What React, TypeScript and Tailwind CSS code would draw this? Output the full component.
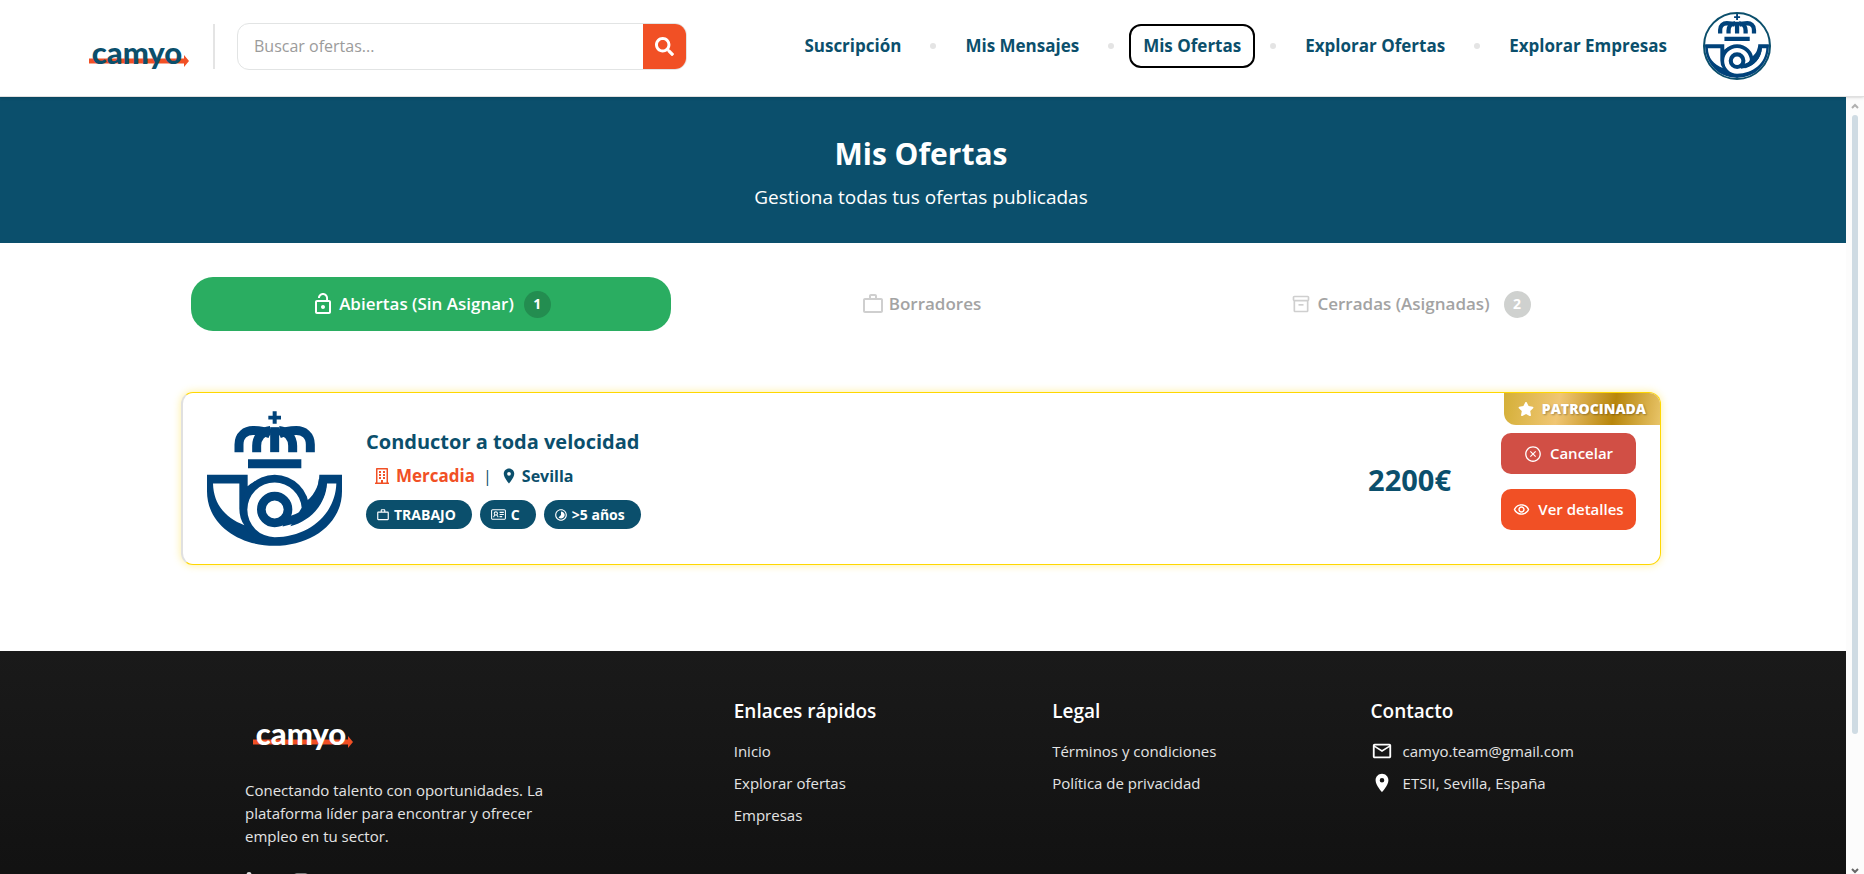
import type { ReactNode } from "react";
import { FaSearch, FaRegBuilding, FaStar, FaLinkedinIn, FaInstagram } from "react-icons/fa";
import { MdLockOpen, MdWorkOutline, MdLocationOn, MdTimelapse, MdMailOutline, MdOutlineInventory2, MdOutlineRemoveRedEye } from "react-icons/md";
import { LiaIdCard } from "react-icons/lia";
import { AiOutlineCloseCircle } from "react-icons/ai";

function CamyoLogo({ color }: { color: string }) {
  return (
    <svg viewBox="0 0 100 60" className="h-15 w-25" role="img" aria-label="camyo">
      <path d="M0 42.500H95V39L100 45L95 51V47.500H0Z" fill="#f15025" />
      <text
        x="48"
        y="48"
        textAnchor="middle"
        fill={color}
        fontSize="31"
        fontWeight="900"
        fontFamily="Lato, sans-serif"
      >
        camyo
      </text>
    </svg>
  );
}

function PostHorn({ className }: { className: string }) {
  return (
    <svg viewBox="0 0 405 404" className={className} role="img" aria-label="Mercadia">
      <g fill="#00427a">
        <path d="M197 0h12v14h13v11h-13v13h-12v-13h-13v-11h13z" />
        <path d="M123 144h160v27h-160z" />
        <g fill="none" stroke="#00427a" strokeWidth="27">
          <path d="M96 123V100C96 72 116 58 138 58C156 58 172 60 190 68" />
          <path d="M149 123V104C149 78 166 60 190 58" />
          <path d="M310 123V100C310 72 290 58 268 58C250 58 234 60 216 68" />
          <path d="M257 123V104C257 78 240 60 216 58" />
          <path d="M203 123V48" />
        </g>
        <path d="M0 191H122V225A104 104 0 0 1 288 278C318 258 337 228 337 191H405V240C405 340 310 404 203 404C95 404 0 340 0 240Z" />
        <circle cx="203" cy="295" r="104" />
      </g>
      <path d="M18 217H97V292Q97 322 112 342C55 320 20 280 18 217Z" fill="#fff" />
      <path d="M203 214A82 82 0 1 0 203 378C305 378 385 310 388 217H360C356 280 310 330 250 345L284 290A82 82 0 0 0 203 214Z" fill="#fff" />
      <path d="M348 204C345 275 300 320 225 334" fill="none" stroke="#00427a" strokeWidth="25" />
      <circle cx="203" cy="295" r="40" fill="#fff" stroke="#00427a" strokeWidth="26" />
    </svg>
  );
}

const navLinks = ["Suscripción", "Mis Mensajes", "Mis Ofertas", "Explorar Ofertas", "Explorar Empresas"];

function Header() {
  return (
    <header className="z-10 flex shrink-0 items-center border-b border-[#e0e0e0] bg-white pr-[93px] pl-[89px] pt-3 pb-4 shadow-sm">
      <a href="#inicio" className="shrink-0">
        <CamyoLogo color="#0b4f6c" />
      </a>
      <div className="ml-6 h-[45px] w-0.5 shrink-0 bg-[#e4e4e4]" />
      <form className="ml-[22px] flex h-[47px] w-[450px] overflow-hidden rounded-xl border border-[#e2e4e4]">
        <input
          type="text"
          aria-label="Buscar ofertas"
          placeholder="Buscar ofertas..."
          className="min-w-0 flex-1 px-4 text-base text-gray-700 outline-none placeholder:text-[#9b9b9b]"
        />
        <button type="button" aria-label="Buscar" className="flex w-[43px] items-center justify-center bg-[#f15025] text-white">
          <FaSearch size={19} />
        </button>
      </form>
      <nav className="ml-auto flex items-center gap-[15px]">
        {navLinks.map((label, i) => (
          <div key={label} className="flex items-center gap-[15px]">
            {i > 0 && <span className="size-1.5 rounded-full bg-[#e4e4e4]" />}
            <a
              href="#nav"
              className={
                label === "Mis Ofertas"
                  ? "rounded-xl border-2 border-black px-3 py-1.5 text-[17px] leading-7 font-bold whitespace-nowrap text-[#0b4f6c]"
                  : "border-2 border-transparent px-3 py-1.5 text-[17px] leading-7 font-bold whitespace-nowrap text-[#0b4f6c]"
              }
            >
              {label}
            </a>
          </div>
        ))}
      </nav>
      <button type="button" aria-label="Perfil" className="ml-[22px] flex size-17 shrink-0 items-center justify-center overflow-hidden rounded-full border-2 border-[#0b4f6c] bg-white">
        <PostHorn className="size-16" />
      </button>
    </header>
  );
}

function Tabs() {
  return (
    <div className="grid grid-cols-3 gap-2.5 px-2.5 text-[17px] font-semibold">
      <button type="button" className="flex h-[54px] items-center justify-center rounded-[22px] bg-[#2aad61] text-white">
        <MdLockOpen size={24} />
        <span className="ml-1">Abiertas (Sin Asignar)</span>
        <span className="ml-2.5 flex size-[27px] items-center justify-center rounded-full bg-[#238d50] text-sm font-bold">1</span>
      </button>
      <button type="button" className="flex h-[54px] items-center justify-center rounded-[22px] text-[#a3a3a3]">
        <MdWorkOutline size={24} className="text-[#cfcfcf]" />
        <span className="ml-1">Borradores</span>
      </button>
      <button type="button" className="flex h-[54px] items-center justify-center rounded-[22px] text-[#a3a3a3]">
        <MdOutlineInventory2 size={20} className="text-[#cfcfcf]" />
        <span className="ml-1.5">Cerradas (Asignadas)</span>
        <span className="ml-3.5 flex size-[27px] items-center justify-center rounded-full bg-[#cfd1cf] text-sm font-bold text-white">2</span>
      </button>
    </div>
  );
}

function Pill({ icon, children }: { icon: ReactNode; children: ReactNode }) {
  return (
    <span className="flex h-[29px] items-center gap-1 rounded-full bg-[#0b4f6c] pr-4 pl-2.5 text-sm font-bold text-white">
      {icon}
      {children}
    </span>
  );
}

function OfferCard() {
  return (
    <article className="relative flex h-[173px] items-center rounded-xl border border-l-2 border-[#ffd700] border-l-[#e0e0e0] bg-white pr-6 pl-6 shadow-[0_0_8px_rgba(255,215,0,0.4)]">
      <div className="absolute top-0 right-0 flex h-8 items-center gap-2 rounded-tr-[11px] rounded-bl-xl bg-[linear-gradient(100deg,#d4af37_0%,#f0c674_35%,#b8860b_70%,#e8c468_100%)] px-3.5 text-sm font-extrabold text-white [text-shadow:1px_1px_2px_rgba(0,0,0,0.3)]">
        <FaStar size={16} />
        PATROCINADA
      </div>
      <PostHorn className="size-[135px] shrink-0" />
      <div className="ml-6">
        <h2 className="text-xl leading-7 font-bold text-[#0b4f6c]">Conductor a toda velocidad</h2>
        <p className="mt-2 flex items-center pl-2 leading-6 font-bold text-[#0b4f6c]">
          <FaRegBuilding size={16} className="text-[#f15025]" />
          <a href="#empresa" className="ml-1.5 text-[17px] text-[#f15025]">Mercadia</a>
          <span className="mx-2 font-normal">|</span>
          <MdLocationOn size={18} />
          <span className="ml-1">Sevilla</span>
        </p>
        <div className="mt-3 flex gap-2">
          <Pill icon={<MdWorkOutline size={14} />}>TRABAJO</Pill>
          <Pill icon={<LiaIdCard size={17} />}>C</Pill>
          <Pill icon={<MdTimelapse size={14} />}>&gt;5 años</Pill>
        </div>
      </div>
      <div className="ml-auto flex items-center gap-[50px] pt-1.5">
        <strong className="pb-1 text-[29px] text-[#0b4f6c]">2200€</strong>
        <div className="flex flex-col gap-[15px] text-[15px] font-semibold text-white">
          <button type="button" className="flex h-[41px] w-[135px] items-center justify-center gap-2 rounded-[10px] bg-[#d14f45]">
            <AiOutlineCloseCircle size={18} />
            Cancelar
          </button>
          <button type="button" className="flex h-[41px] w-[135px] items-center justify-center gap-2 rounded-[10px] bg-[#f15025]">
            <MdOutlineRemoveRedEye size={17} />
            Ver detalles
          </button>
        </div>
      </div>
    </article>
  );
}

function FooterColumn({ title, children }: { title: string; children: ReactNode }) {
  return (
    <div>
      <h3 className="text-[19px] leading-7 font-semibold text-white">{title}</h3>
      <ul className="mt-3.5 flex flex-col gap-2 leading-6">{children}</ul>
    </div>
  );
}

function Footer() {
  return (
    <footer className="flex-1 bg-linear-to-b from-[#1a1a1a] to-[#111111] pt-[46px] text-[15px] text-[#e4e4e4]">
      <div className="mx-auto grid max-w-[1356px] grid-cols-[40fr_23fr_23fr_23fr] gap-[88px]">
        <div>
          <div className="pl-2">
            <CamyoLogo color="#ffffff" />
          </div>
          <p className="mt-[22px] max-w-[310px] leading-[23px]">
            Conectando talento con oportunidades. La plataforma líder para encontrar y ofrecer empleo en tu sector.
          </p>
          <div className="mt-6 flex gap-5">
            <a href="#linkedin" aria-label="LinkedIn"><FaLinkedinIn size={24} /></a>
            <a href="#instagram" aria-label="Instagram"><FaInstagram size={24} /></a>
          </div>
        </div>
        <FooterColumn title="Enlaces rápidos">
          <li><a href="#inicio">Inicio</a></li>
          <li><a href="#ofertas">Explorar ofertas</a></li>
          <li><a href="#empresas">Empresas</a></li>
        </FooterColumn>
        <FooterColumn title="Legal">
          <li><a href="#terminos">Términos y condiciones</a></li>
          <li><a href="#privacidad">Política de privacidad</a></li>
        </FooterColumn>
        <FooterColumn title="Contacto">
          <li className="flex items-center gap-2.5"><MdMailOutline size={22} className="text-white" />camyo.team@gmail.com</li>
          <li className="flex items-center gap-2.5"><MdLocationOn size={22} className="text-white" />ETSII, Sevilla, España</li>
        </FooterColumn>
      </div>
    </footer>
  );
}

function ScrollRail() {
  return (
    <div aria-hidden="true" className="flex w-[18px] shrink-0 flex-col items-center bg-[#fcfcfc] pt-1.5">
      <svg viewBox="0 0 8 6" className="h-1.5 w-2"><path d="M1 5L4 2L7 5" fill="none" stroke="#b0b0b0" strokeWidth="2" /></svg>
      <div className="mt-1.5 h-[619px] w-1.5 rounded-full bg-[#cfdbe3]" />
      <svg viewBox="0 0 8 6" className="mt-auto h-1.5 w-2"><path d="M1 1L4 4L7 1" fill="none" stroke="#666" strokeWidth="2" /></svg>
    </div>
  );
}

export default function App() {
  return (
    <div className="flex h-screen flex-col overflow-hidden bg-white font-['Open_Sans',sans-serif]">
      <Header />
      <div className="flex min-h-0 flex-1">
        <div className="flex min-w-0 flex-1 flex-col overflow-hidden">
          <section className="shrink-0 bg-[#0b4f6c] pt-[37px] pr-1 pb-8 text-center text-white">
            <h1 className="text-3xl leading-10 font-bold">Mis Ofertas</h1>
            <p className="mt-[9px] text-[19px] leading-7">Gestiona todas tus ofertas publicadas</p>
          </section>
          <main className="shrink-0 pt-[34px] pr-1 pb-[86px]">
            <div className="mx-auto w-full max-w-[1480px]">
              <Tabs />
              <div className="mt-[61px]">
                <OfferCard />
              </div>
            </div>
          </main>
          <Footer />
        </div>
        <ScrollRail />
      </div>
    </div>
  );
}
